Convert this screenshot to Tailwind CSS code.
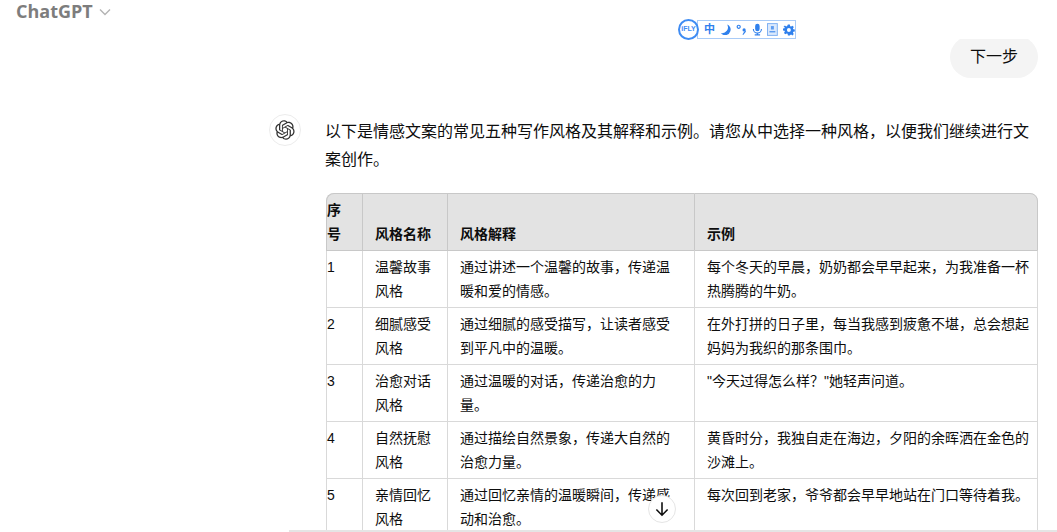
<!DOCTYPE html>
<html lang="zh-CN">
<head>
  <meta charset="UTF-8" />
  <title>ChatGPT</title>
  <script src="https://cdn.jsdelivr.net/npm/@tailwindcss/browser@4"></script>
</head>
<body class="relative h-[532px] overflow-hidden bg-white font-['Liberation_Sans','Noto_Sans_CJK_SC',sans-serif] text-[#0d0d0d]">
  <!-- Header -->
  <header class="relative z-10 h-[39px] bg-white">
    <div class="flex h-[23px] items-center gap-[6px] pl-4">
      <span class="font-['Open_Sans',sans-serif] text-[18px] font-bold text-[#7d7d7d]">ChatGPT</span>
      <svg width="12" height="12" viewBox="0 0 12 12" fill="none" stroke="#b4b4b4" stroke-width="1.4"><path d="M1 3.5l5 5 5-5" /></svg>
    </div>

    <!-- iFLY toolbar -->
    <div class="absolute left-[678px] top-[19px] flex items-center">
      <div class="z-10 flex h-[21px] w-[21px] items-center justify-center rounded-full border-2 border-[#3f8cf3] bg-white font-['Liberation_Sans',sans-serif] text-[7px] font-bold text-[#3f8cf3]">iFLY</div>
      <div class="-ml-[2px] flex h-[19px] w-[99px] items-center gap-[5px] border border-[#a9cbf7] bg-white pl-[6px] text-[#2f80ed]">
        <span class="w-[11px] text-[11px] font-bold leading-none">中</span>
        <svg width="11" height="11" viewBox="0 0 12 12" fill="currentColor"><path d="M11.500 8A6 6 0 0 1 1 10 6.500 6.500 0 0 0 8 .5 6 6 0 0 1 11.500 8z" /></svg>
        <svg width="11" height="11" viewBox="0 0 12 12" fill="currentColor"><circle cx="3" cy="3" r="1.7" fill="none" stroke="currentColor" stroke-width="1.300" /><circle cx="9" cy="6.500" r="1.800" /><path d="M10.700 7l.3 1.500L8 12l-.8-.5 1.800-3z" /></svg>
        <svg width="11" height="13" viewBox="0 0 12 14" fill="currentColor"><rect x="3.500" y="0.500" width="5" height="8.500" rx="2.500" /><path d="M1.500 6.500a4.500 4.500 0 0 0 9 0M6 11v2M3 13h6" fill="none" stroke="currentColor" stroke-width="1.200" /></svg>
        <svg width="11" height="13" viewBox="0 0 11 13"><rect x="0.500" y="0.500" width="10" height="12" fill="#dbe9fc" stroke="#7fb0f2" /><rect x="4" y="3" width="3" height="3.500" fill="#5d9cf0" /><rect x="2.500" y="8" width="6" height="1.500" fill="#5d9cf0" /></svg>
        <svg width="12" height="12" viewBox="0 0 24 24" fill="currentColor"><path fill-rule="evenodd" d="M10 1h4l.6 3.200 1.900.8 2.700-1.800 2.800 2.800-1.800 2.700.8 1.900 3 .6v4l-3 .6-.8 1.900 1.800 2.700-2.800 2.800-2.700-1.800-1.900.8L14 23h-4l-.6-3.200-1.900-.8-2.700 1.800-2.800-2.800 1.800-2.700-.8-1.900-3-.6v-4l3-.6.8-1.900L1 5.800 3.800 3l2.700 1.800 1.900-.8zM12 8a4 4 0 1 0 0 8 4 4 0 0 0 0-8z" /></svg>
      </div>
    </div>
  </header>

  <main class="pl-[269px] pr-[19px]">
    <!-- User message -->
    <div class="-mt-[3px] flex justify-end">
      <div class="rounded-[21px] bg-[#f4f4f4] px-5 py-[7px] text-[16px] leading-[28px]">下一步</div>
    </div>

    <!-- Assistant message -->
    <div class="mt-9 flex gap-[25px]">
      <div class="flex h-8 w-8 shrink-0 items-center justify-center rounded-full border border-[#ececec] bg-white">
        <svg width="20" height="20" viewBox="0 0 41 41" fill="#333"><path d="M37.5324 16.8707C37.9808 15.5241 38.1363 14.0974 37.9886 12.6859C37.8409 11.2744 37.3934 9.91076 36.676 8.68622C35.6126 6.83404 33.9882 5.3676 32.0373 4.4985C30.0864 3.62941 27.9098 3.40259 25.8215 3.85078C24.8796 2.7893 23.7219 1.94125 22.4257 1.36341C21.1295 0.785575 19.7249 0.491269 18.3058 0.500197C16.1708 0.495044 14.0893 1.16803 12.3614 2.42214C10.6335 3.67624 9.34853 5.44666 8.6917 7.47815C7.30085 7.76286 5.98686 8.3414 4.8377 9.17505C3.68854 10.0087 2.73073 11.0782 2.02839 12.312C0.956464 14.1591 0.498905 16.2988 0.721698 18.4228C0.944492 20.5467 1.83612 22.5449 3.268 24.1293C2.81966 25.4759 2.66413 26.9026 2.81182 28.3141C2.95951 29.7256 3.40701 31.0892 4.12437 32.3138C5.18791 34.1659 6.8123 35.6322 8.76321 36.5013C10.7141 37.3704 12.8907 37.5973 14.9789 37.1492C15.9208 38.2107 17.0786 39.0587 18.3747 39.6366C19.6709 40.2144 21.0755 40.5087 22.4946 40.4998C24.6307 40.5054 26.7133 39.8321 28.4418 38.5772C30.1704 37.3223 31.4556 35.5506 32.1119 33.5179C33.5027 33.2332 34.8167 32.6547 35.9659 31.821C37.115 30.9874 38.0728 29.9178 38.7752 28.684C39.8458 26.8371 40.3023 24.6979 40.0789 22.5748C39.8556 20.4517 38.9639 18.4544 37.5324 16.8707ZM22.4978 37.8849C20.7443 37.8874 19.0459 37.2733 17.6994 36.1501C17.7601 36.117 17.8666 36.0586 17.936 36.0161L25.9004 31.4156C26.1003 31.3019 26.2663 31.137 26.3813 30.9378C26.4964 30.7386 26.5563 30.5124 26.5549 30.2825V19.0542L29.9213 20.998C29.9389 21.0068 29.9541 21.0198 29.9656 21.0359C29.977 21.052 29.9842 21.0707 29.9867 21.0902V30.3889C29.9842 32.375 29.1946 34.2791 27.7909 35.6841C26.3872 37.0892 24.4838 37.8806 22.4978 37.8849ZM6.39227 31.0064C5.51397 29.4888 5.19742 27.7107 5.49804 25.9832C5.55718 26.0187 5.66048 26.0818 5.73461 26.1244L13.699 30.7248C13.8975 30.8408 14.1233 30.902 14.3532 30.902C14.583 30.902 14.8088 30.8408 15.0073 30.7248L24.731 25.1103V28.9979C24.7321 29.0177 24.7283 29.0376 24.7199 29.0556C24.7115 29.0736 24.6988 29.0893 24.6829 29.1012L16.6317 33.7497C14.9096 34.7416 12.8643 35.0097 10.9447 34.4954C9.02506 33.9811 7.38785 32.7263 6.39227 31.0064ZM4.29707 13.6194C5.17156 12.0998 6.55279 10.9364 8.19885 10.3327C8.19885 10.4013 8.19491 10.5228 8.19491 10.6071V19.808C8.19351 20.0378 8.25334 20.2638 8.36823 20.4629C8.48312 20.6619 8.64893 20.8267 8.84863 20.9404L18.5723 26.5542L15.206 28.4979C15.1894 28.5089 15.1703 28.5155 15.1505 28.5173C15.1307 28.5191 15.1107 28.516 15.0924 28.5082L7.04046 23.8557C5.32135 22.8601 4.06716 21.2235 3.55289 19.3046C3.03862 17.3858 3.30624 15.3413 4.29707 13.6194ZM31.955 20.0556L22.2312 14.4411L25.5976 12.4981C25.6142 12.4872 25.6333 12.4805 25.6531 12.4787C25.6729 12.4769 25.6928 12.4801 25.7111 12.4879L33.7631 17.1364C34.9967 17.849 36.0017 18.8982 36.6606 20.1613C37.3194 21.4244 37.6047 22.849 37.4832 24.2684C37.3617 25.6878 36.8382 27.0432 35.9743 28.1759C35.1103 29.3086 33.9415 30.1717 32.6047 30.6641C32.6047 30.5947 32.6047 30.4733 32.6047 30.3889V21.188C32.6066 20.9586 32.5474 20.7328 32.4332 20.5338C32.319 20.3348 32.154 20.1698 31.955 20.0556ZM35.3055 15.0128C35.2464 14.9765 35.1431 14.9142 35.069 14.8717L27.1045 10.2712C26.906 10.1554 26.6803 10.0943 26.4504 10.0943C26.2206 10.0943 25.9948 10.1554 25.7963 10.2712L16.0726 15.8858V11.9982C16.0715 11.9783 16.0753 11.9585 16.0837 11.9405C16.0921 11.9225 16.1048 11.9068 16.1207 11.8949L24.1719 7.25025C25.4053 6.53903 26.8158 6.19376 28.2383 6.25482C29.6608 6.31589 31.0364 6.78077 32.2044 7.59508C33.3723 8.40939 34.2842 9.53945 34.8334 10.8531C35.3826 12.1667 35.5464 13.6095 35.3055 15.0128ZM14.2424 21.9419L10.8752 19.9981C10.8576 19.9893 10.8423 19.9763 10.8309 19.9602C10.8195 19.9441 10.8122 19.9254 10.8098 19.9058V10.6071C10.8107 9.18295 11.2173 7.78848 11.9819 6.58696C12.7466 5.38544 13.8377 4.42659 15.1275 3.82264C16.4173 3.21869 17.8524 2.99464 19.2649 3.1767C20.6775 3.35876 22.0089 3.93941 23.1034 4.85067C23.0427 4.88379 22.937 4.94215 22.8668 4.98473L14.9024 9.58517C14.7025 9.69878 14.5366 9.86356 14.4215 10.0626C14.3065 10.2616 14.2466 10.4877 14.2479 10.7175L14.2424 21.9419ZM16.071 17.9991L20.4018 15.4978L24.7325 17.9975V22.9985L20.4018 25.4983L16.071 22.9985V17.9991Z" /></svg>
      </div>
      <div class="w-[712px] pt-1">
        <p class="-ml-px text-[16px] leading-[28px]">以下是情感文案的常见五种写作风格及其解释和示例。请您从中选择一种风格，以便我们继续进行文案创作。</p>

        <table class="mt-[19px] w-[712px] table-fixed border-separate border-spacing-0 text-[14px] leading-[24px]">
          <colgroup>
            <col class="w-[36px]" />
            <col class="w-[85px]" />
            <col class="w-[247px]" />
            <col class="w-[344px]" />
          </colgroup>
          <thead>
            <tr class="bg-[#e3e3e3] text-left font-bold">
              <th class="rounded-tl-lg border-t border-b border-l border-[#c8c8c8] py-1 pr-3 align-bottom">序号</th>
              <th class="border-t border-b border-l border-[#c8c8c8] py-1 pl-3 align-bottom">风格名称</th>
              <th class="border-t border-b border-l border-[#c8c8c8] py-1 pl-3 align-bottom">风格解释</th>
              <th class="rounded-tr-lg border-t border-r border-b border-l border-[#c8c8c8] py-1 pl-3 align-bottom">示例</th>
            </tr>
          </thead>
          <tbody>
            <tr>
              <td class="h-[57px] border-b border-l border-[#d9d9d9] py-1 align-top">1</td>
              <td class="border-b border-l border-[#d9d9d9] py-1 pr-3 pl-3 align-top">温馨故事风格</td>
              <td class="border-b border-l border-[#d9d9d9] py-1 pr-3 pl-3 align-top">通过讲述一个温馨的故事，传递温暖和爱的情感。</td>
              <td class="border-r border-b border-l border-[#d9d9d9] py-1 pr-1 pl-3 align-top">每个冬天的早晨，奶奶都会早早起来，为我准备一杯热腾腾的牛奶。</td>
            </tr>
            <tr>
              <td class="h-[57px] border-b border-l border-[#d9d9d9] py-1 align-top">2</td>
              <td class="border-b border-l border-[#d9d9d9] py-1 pr-3 pl-3 align-top">细腻感受风格</td>
              <td class="border-b border-l border-[#d9d9d9] py-1 pr-3 pl-3 align-top">通过细腻的感受描写，让读者感受到平凡中的温暖。</td>
              <td class="border-r border-b border-l border-[#d9d9d9] py-1 pr-1 pl-3 align-top">在外打拼的日子里，每当我感到疲惫不堪，总会想起妈妈为我织的那条围巾。</td>
            </tr>
            <tr>
              <td class="h-[57px] border-b border-l border-[#d9d9d9] py-1 align-top">3</td>
              <td class="border-b border-l border-[#d9d9d9] py-1 pr-3 pl-3 align-top">治愈对话风格</td>
              <td class="border-b border-l border-[#d9d9d9] py-1 pr-3 pl-3 align-top">通过温暖的对话，传递治愈的力量。</td>
              <td class="border-r border-b border-l border-[#d9d9d9] py-1 pr-1 pl-3 align-top">"今天过得怎么样？"她轻声问道。</td>
            </tr>
            <tr>
              <td class="h-[57px] border-b border-l border-[#d9d9d9] py-1 align-top">4</td>
              <td class="border-b border-l border-[#d9d9d9] py-1 pr-3 pl-3 align-top">自然抚慰风格</td>
              <td class="border-b border-l border-[#d9d9d9] py-1 pr-3 pl-3 align-top">通过描绘自然景象，传递大自然的治愈力量。</td>
              <td class="border-r border-b border-l border-[#d9d9d9] py-1 pr-1 pl-3 align-top">黄昏时分，我独自走在海边，夕阳的余晖洒在金色的沙滩上。</td>
            </tr>
            <tr>
              <td class="h-[57px] border-b border-l border-[#d9d9d9] py-1 align-top">5</td>
              <td class="border-b border-l border-[#d9d9d9] py-1 pr-3 pl-3 align-top">亲情回忆风格</td>
              <td class="border-b border-l border-[#d9d9d9] py-1 pr-3 pl-3 align-top">通过回忆亲情的温暖瞬间，传递感动和治愈。</td>
              <td class="border-r border-b border-l border-[#d9d9d9] py-1 pr-1 pl-3 align-top">每次回到老家，爷爷都会早早地站在门口等待着我。</td>
            </tr>
          </tbody>
        </table>
      </div>
    </div>
  </main>

  <!-- Scroll button -->
  <button class="absolute left-[648px] top-[495px] z-10 flex h-[28px] w-[28px] items-center justify-center rounded-full border border-[#e5e5e5] bg-white">
    <svg width="18" height="18" viewBox="0 0 16 16" fill="none" stroke="#0d0d0d" stroke-width="1.4"><path d="M8 2v11.500M3 8.500l5 5 5-5" /></svg>
  </button>

  <!-- Composer edge -->
  <div class="absolute bottom-0 left-[289px] right-0 h-[2px] bg-[#e5e5e5]"></div>
</body>
</html>
